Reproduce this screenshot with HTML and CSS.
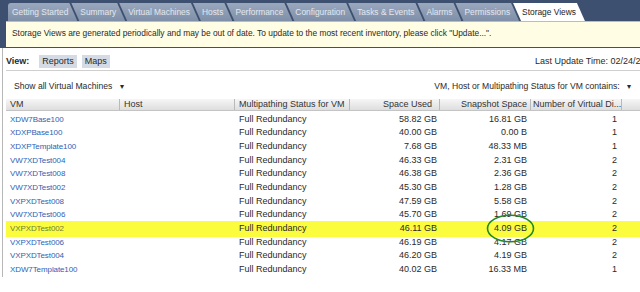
FILE: index.html
```html
<!DOCTYPE html>
<html lang="en">
<head>
  <meta charset="UTF-8" />
  <title>Storage Views</title>
  <link rel="stylesheet" href="styles.css">
</head>
<body>

<div class="tabs">
  <span class="tab first">Getting Started</span>
  <span class="tab">Summary</span>
  <span class="tab">Virtual Machines</span>
  <span class="tab">Hosts</span>
  <span class="tab">Performance</span>
  <span class="tab">Configuration</span>
  <span class="tab">Tasks &amp; Events</span>
  <span class="tab">Alarms</span>
  <span class="tab">Permissions</span>
  <span class="tab active">Storage Views</span>
</div>

<div class="frame">
  <div class="notice">Storage Views are generated periodically and may be out of date. To update to the most recent inventory, please click "Update...".</div>
</div>

<div class="panel">
  <div class="viewbar">
    <b>View:</b>
    <span class="btn">Reports</span>
    <span class="btn">Maps</span>
    <span class="updated">Last Update Time: 02/24/2010 10:12:47 AM</span>
  </div>

  <div class="filters">
    <span>Show all Virtual Machines <span class="caret">&#9662;</span></span>
    <span>VM, Host or Multipathing Status for VM contains: <span class="caret">&#9662;</span></span>
  </div>

  <div class="grid">
    <div class="row head">
      <span>VM</span>
      <span>Host</span>
      <span>Multipathing Status for VM</span>
      <span class="num">Space Used</span>
      <span class="num">Snapshot Space</span>
      <span>Number of Virtual Di...</span>
      <span></span>
    </div>
    <div id="rows"></div>
  </div>
</div>

<svg class="mark" width="50" height="30" viewBox="0 0 50 30">
  <ellipse cx="24.5" cy="14.5" rx="23" ry="13.3" fill="none" stroke="#1f8a1f" stroke-width="1.6" />
</svg>

<script>
  const data = [
    ["XDW7Base100", "58.82 GB", "16.81 GB", 1],
    ["XDXPBase100", "40.00 GB", "0.00 B", 1],
    ["XDXPTemplate100", "7.68 GB", "48.33 MB", 1],
    ["VW7XDTest004", "46.33 GB", "2.31 GB", 2],
    ["VW7XDTest008", "46.38 GB", "2.36 GB", 2],
    ["VW7XDTest002", "45.30 GB", "1.28 GB", 2],
    ["VXPXDTest008", "47.59 GB", "5.58 GB", 2],
    ["VW7XDTest006", "45.70 GB", "1.69 GB", 2],
    ["VXPXDTest002", "46.11 GB", "4.09 GB", 2],
    ["VXPXDTest006", "46.19 GB", "4.17 GB", 2],
    ["VXPXDTest004", "46.20 GB", "4.19 GB", 2],
    ["XDW7Template100", "40.02 GB", "16.33 MB", 1]
  ];

  const rows = document.getElementById("rows");
  data.forEach((d, i) => {
    const row = document.createElement("div");
    row.className = i === 8 ? "row hl" : "row";
    row.innerHTML = `
      <span class="vm">${d[0]}</span>
      <span></span>
      <span>Full Redundancy</span>
      <span class="num used">${d[1]}</span>
      <span class="num snap">${d[2]}</span>
      <span class="num disks">${d[3]}</span>
      <span></span>
    `;
    rows.appendChild(row);
  });
</script>
</body>
</html>
```

FILE: styles.css
```css
* {
  margin: 0;
  padding: 0;
  box-sizing: border-box;
}

body {
  width: 640px;
  height: 292px;
  overflow: hidden;
  position: relative;
  background: #fff;
  font-family: "Liberation Sans", Arial, sans-serif;
  font-size: 9px;
  color: #2a2a2a;
}

.tabs {
  display: flex;
  align-items: flex-end;
  height: 21px;
  padding: 3px 0 0 8px;
  background: #3d5070;
}

.tab {
  height: 18px;
  line-height: 18px;
  padding: 0 9px 0 9px;
  margin-left: -6px;
  font-size: 8.4px;
  color: #e3e8ef;
  background: linear-gradient(#9aa8bd, #7f8fa8);
  clip-path: polygon(0 0, calc(100% - 8px) 0, 100% 100%, 8px 100%);
  white-space: nowrap;
}

.tab.first {
  margin-left: 0;
  padding-left: 4px;
  border-top-left-radius: 3px;
  clip-path: polygon(0 0, calc(100% - 8px) 0, 100% 100%, 0 100%);
}

.tab.active {
  background: #fff;
  color: #222;
}

.frame {
  background: #3d5070;
  padding: 0 0 1px 6px;
}

.notice {
  height: 26px;
  line-height: 22px;
  padding-left: 6px;
  font-size: 8.4px;
  background: #fffde3;
  border-top: 1px solid #c9c27e;
  white-space: nowrap;
}

.panel {
  margin-left: 2px;
  border-left: 1px solid #b7b7b7;
  padding-left: 3px;
}

.viewbar {
  display: flex;
  align-items: center;
  height: 23px;
  padding-top: 4px;
  border-bottom: 1px solid #cfcfcf;
}

.viewbar b {
  margin-right: 10px;
}

.btn {
  height: 13px;
  line-height: 13px;
  padding: 0 3px;
  margin-right: 5px;
  background: #d4dbe5;
}

.updated {
  margin-left: auto;
  width: 105px;
  flex-shrink: 0;
  white-space: nowrap;
}

.filters {
  display: flex;
  justify-content: space-between;
  align-items: flex-end;
  height: 28px;
  padding: 0 9px 6px 8px;
  line-height: 12px;
  font-size: 8.6px;
}

.caret {
  margin-left: 5px;
  font-size: 8px;
}

.row {
  display: grid;
  grid-template-columns: 114px 115px 115px 90px 91px 91px 8px;
  height: 13.7px;
  line-height: 13.7px;
  white-space: nowrap;
}

.row span {
  padding-left: 4px;
  overflow: hidden;
}

.row .num {
  text-align: right;
  padding-left: 0;
}

.head {
  grid-template-columns: 114px 115px 115px 90px 91px 91px 24px;
  height: 12px;
  line-height: 11px;
  margin-bottom: 1.5px;
  background: linear-gradient(#f6f6f6, #dedede);
  border-bottom: 1px solid #c4c4c4;
  color: #333;
}

.head span {
  border-right: 1px solid #b9b9b9;
}

.head span:last-child {
  border-right: none;
}

.head .num:nth-child(4) {
  padding-right: 7px;
}

.head .num:nth-child(5) {
  padding-right: 3px;
}

.head span:nth-child(6) {
  padding-left: 2px;
}

.vm {
  color: #2e62b6;
  font-size: 8px;
  letter-spacing: -0.1px;
}

.used {
  padding-right: 3px;
}

.snap {
  padding-right: 4px;
}

.disks {
  padding-right: 5px;
}

.hl {
  background: #fcfc3f;
  box-shadow: 0 -1px 0 #fcfc3f, 0 1px 0 #fcfc3f;
}

.hl .vm {
  color: #6f8034;
}

.mark {
  position: absolute;
  left: 486px;
  top: 214px;
}
```
